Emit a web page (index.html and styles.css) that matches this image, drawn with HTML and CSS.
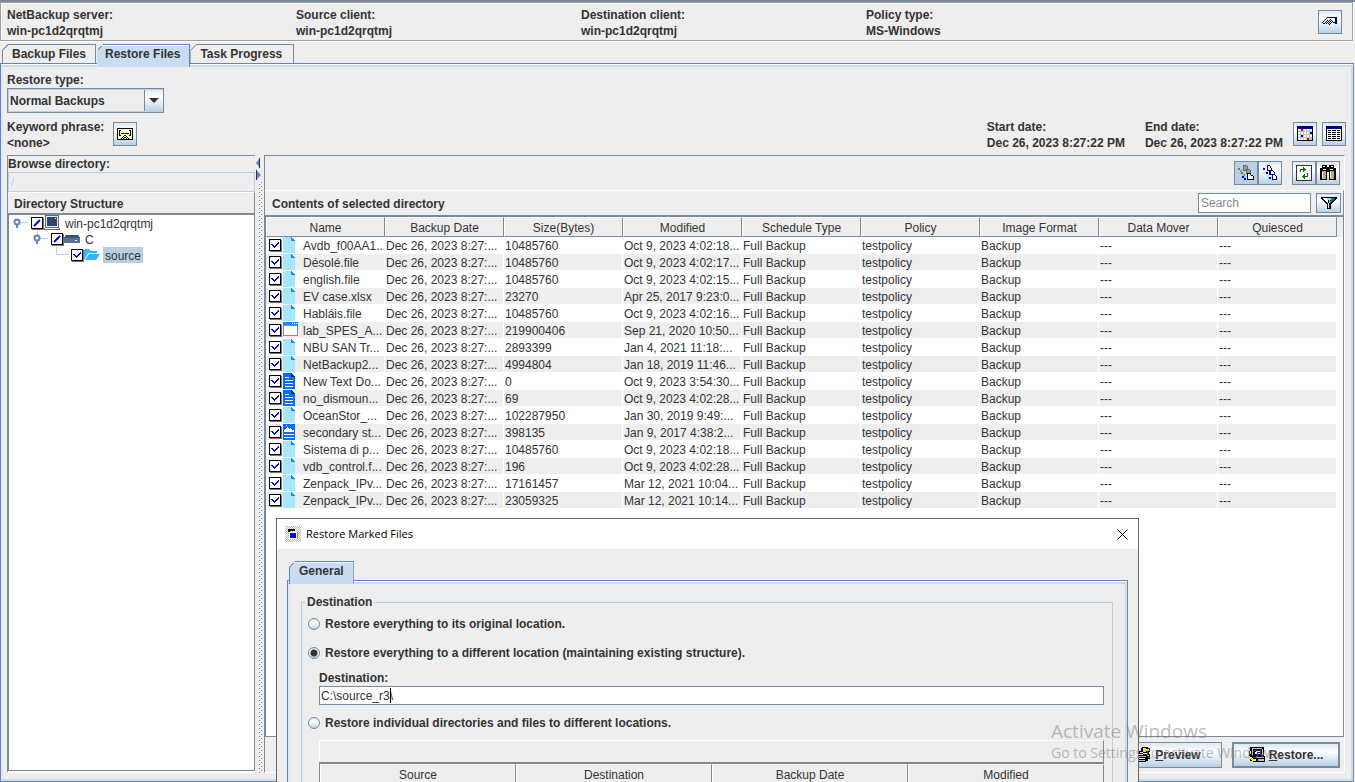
FILE: index.html
```html
<!DOCTYPE html>
<html lang="en">
<head>
<meta charset="utf-8">
<title>Backup, Archive, and Restore</title>
<link rel="stylesheet" href="styles.css">
</head>
<body>
<svg class="sprite" aria-hidden="true">
  <symbol id="i-file" viewBox="0 0 16 16"><path fill="#a6e7ff" d="M0 0h8v4h4v12H0z"/><path fill="#1a8cff" d="M8 0l4 4H8z"/></symbol>
  <symbol id="i-text" viewBox="0 0 16 16"><path fill="#0a6cff" d="M0 0h8v4h4v12H0z"/><path fill="#003a5c" d="M8 0l4 4H8z"/><path fill="#fff" d="M2 4h4v1H2zM2 7h8v1H2zM2 10h8v1H2zM2 13h8v1H2z"/></symbol>
  <symbol id="i-pic" viewBox="0 0 16 16"><path fill="#0a6cff" d="M0 0h12v16H0z"/><path fill="#fff" d="M1 8V6h1V5h1V4h1V3h1v1h1v1h1V4h1v1h1v1h2v2zM3 1h1v1H3zM1 10h10v1H1zM1 13h10v1H1z"/></symbol>
  <symbol id="i-app" viewBox="0 0 16 16"><path fill="#8c8c8c" d="M0 1h15v13H0z"/><path fill="#fff" d="M1 4h13v9H1z"/><path fill="#1a8cff" d="M0 0h15v3H0z"/><path fill="#fff" d="M9 1h1v1H9zM11 1h1v1h-1zM13 1h1v1h-1z"/></symbol>
</svg>

<div class="app">
  <header class="info">
    <div>NetBackup server:<br>win-pc1d2qrqtmj</div>
    <div>Source client:<br>win-pc1d2qrqtmj</div>
    <div>Destination client:<br>win-pc1d2qrqtmj</div>
    <div>Policy type:<br>MS-Windows</div>
    <button class="btn icon-btn" aria-label="Change client settings">
      <svg width="16" height="16" viewBox="0 0 16 16" shape-rendering="crispEdges"><path fill="#fff" d="M4 4h9v4H8L5 9z"/><path fill="#000" d="M5 3h8v1H5zM4 4h1v1H4zM3 5h1v1H3zM2 6h1v1H2zM1 7h1v1H1zM0 8h1v1H0zM8 5h1v1H8zM9 6h1v1H9zM10 7h1v1h-1zM11 8h2v1h-2zM1 9h2v1H1zM3 8h1v1H3zM5 6h1v1H5zM4 7h1v1H4zM6 7h1v1H6zM5 8h1v1H5zM7 6h1v1H7zM7 8h1v1H7zM8 7h1v1H8zM4 9h1v1H4zM6 9h1v1H6zM8 9h1v1H8zM7 10h1v1H7zM9 8h1v1H9z"/><path fill="#000080" d="M13 3h2v7h-2z"/></svg>
    </button>
  </header>

  <nav class="tabs">
    <button class="tab">Backup Files</button>
    <button class="tab selected">Restore Files</button>
    <button class="tab">Task Progress</button>
  </nav>

  <main class="pane">
    <div class="restore-type">
      <label for="rtype">Restore type:</label>
      <select id="rtype" class="combo"><option>Normal Backups</option></select>
    </div>
    <div class="criteria">
      <div class="keyword">Keyword phrase:<br>&lt;none&gt;</div>
      <button class="btn icon-btn" aria-label="Edit keyword phrase">
        <svg width="16" height="12" viewBox="0 0 16 12" shape-rendering="crispEdges"><path d="M0 0h16v12H0z"/><path fill="#ffffcf" d="M1 1h14v10H1z"/><path d="M2 2h2v1H3v4h1v1H2zM12 2h2v6h-2V7h1V3h-1zM7 7h2v1H7zM6 8h1v1H6zM9 8h1v1H9zM5 9h1v1H5zM10 9h1v1h-1zM4 10h1v1H4zM7 9h2v1H7zM6 10h1v1H6zM9 10h1v1H9zM11 10h1v1h-1z"/><path fill="#00f" d="M4 5h8v1H4z"/></svg>
      </button>
      <span class="spacer"></span>
      <div class="date">Start date:<br>Dec 26, 2023 8:27:22 PM</div>
      <div class="date">End date:<br>Dec 26, 2023 8:27:22 PM</div>
      <button class="btn icon-btn" aria-label="Choose dates">
        <svg width="16" height="16" viewBox="0 0 16 16" shape-rendering="crispEdges"><path d="M0 0h16v15H0z"/><path fill="#000080" d="M0 0h16v3H0z"/><path fill="#c0c0c0" d="M1 3h14v11H1z"/><path fill="#fff" d="M1 3h2v2H1zM7 3h2v2H7zM10 3h2v2h-2zM1 6h2v2H1zM4 6h2v2H4zM7 6h2v2H7zM10 6h2v2h-2zM1 9h2v2H1zM7 9h2v2H7zM10 9h2v2h-2zM13 9h2v2h-2zM1 12h2v2H1zM4 12h2v2H4zM7 12h2v2H7zM13 3h2v2h-2z"/><path fill="red" d="M4 3h2v2H4zM10 12h2v2h-2z"/><path fill="#00f" d="M13 6h2v2h-2zM4 9h2v2H4z"/></svg>
      </button>
      <button class="btn icon-btn" aria-label="List images">
        <svg width="16" height="16" viewBox="0 0 16 16" shape-rendering="crispEdges"><path d="M0 0h16v15H0z"/><path fill="#000080" d="M0 0h16v3H0z"/><path fill="#fff" d="M1 3h14v11H1z"/><path d="M2 4h3v1H2zM6 4h4v1H6zM11 4h3v1h-3zM2 6h3v1H2zM6 6h4v1H6zM11 6h3v1h-3zM2 8h3v1H2zM6 8h4v1H6zM11 8h3v1h-3zM2 10h3v1H2zM6 10h4v1H6zM11 10h3v1h-3zM2 12h3v1H2zM6 12h4v1H6zM11 12h3v1h-3z"/></svg>
      </button>
    </div>

    <div class="split">
      <section class="browse">
        <label class="browse-label" for="dir">Browse directory:</label>
        <input id="dir" class="dir-input" type="text" value="/" disabled>
        <h2 class="section-title">Directory Structure</h2>
        <ul class="tree">
          <li class="node level-0">
            <svg class="handle" width="16" height="16" viewBox="0 0 16 16"><path stroke="#b8cfe5" d="M7 7.500h8"/><path stroke="#6382bf" stroke-width="2" d="M4 9v4"/><circle cx="4" cy="7" r="2.500" fill="#fff" stroke="#6382bf" stroke-width="2"/></svg>
            <input type="checkbox" class="check part" id="n0"><svg width="16" height="16" viewBox="0 0 16 16" shape-rendering="crispEdges"><path fill="#5a6c8c" d="M1 0h14v13h1v2H0v-2h1z"/><path fill="#e8eef8" d="M2 1h12v11H2z"/><path fill="#2f4468" d="M3 2h10v9H3z"/><path fill="#fff" d="M11 3h1v1h-1zM1 13h14v1H1z"/></svg><label for="n0">win-pc1d2qrqtmj</label>
          </li>
          <li class="node level-1">
            <svg class="handle" width="16" height="16" viewBox="0 0 16 16"><path stroke="#b8cfe5" d="M7 7.500h8M4.500 0v4"/><path stroke="#6382bf" stroke-width="2" d="M4 9v4"/><circle cx="4" cy="7" r="2.500" fill="#fff" stroke="#6382bf" stroke-width="2"/></svg>
            <input type="checkbox" class="check part" id="n1"><svg width="16" height="16" viewBox="0 0 16 16"><path fill="#5b6f96" d="M2 4h12l2 3v5H0V7z"/><path fill="#3d5077" d="M2 4h12l2 3H0z"/><path fill="#fff" d="M11 9h2v1h-2z"/></svg><label for="n1">C</label>
          </li>
          <li class="node level-2">
            <svg class="handle" width="16" height="16" viewBox="0 0 16 16" fill="none"><path stroke="#b8cfe5" d="M3.500 0v7.500H16"/></svg>
            <input type="checkbox" class="check" id="n2" checked><svg width="16" height="16" viewBox="0 0 16 16"><path fill="#35b6ff" d="M0 2h5l2 2h6v2H4L1 12H0z"/><path fill="#35b6ff" d="M5 7h11l-4 6H1z"/></svg><label for="n2" class="chosen">source</label>
          </li>
        </ul>
      </section>

      <div class="divider">
        <svg width="6" height="26" viewBox="0 0 6 26"><path fill="#eee" d="M0 0h6v26H0z"/><path fill="#6382bf" d="M4 3v10L0 8z"/><path fill="#333" d="M3 3h1v10H3z"/><path fill="#6382bf" d="M0 15v10l5-5z"/><path fill="#333" d="M0 15h1v10H0z"/></svg>
      </div>

      <section class="contents">
        <div class="toolbar">
          <div class="group">
            <button class="btn icon-btn pressed" aria-label="Show all backups">
              <svg width="16" height="16" viewBox="0 0 16 16" shape-rendering="crispEdges"><path fill="#999" d="M5 0h4v1h1v3h2v1h1v4H8V6H5z"/><path fill="#666" d="M5 0h4v1H6v4h2v1H5zM9 1h1v3H9zM8 4h4v1H9v3h3v1H8zM12 5h1v4h-1z"/><path fill="#fff" d="M10 9h2v2h3v3h-5z"/><path d="M9 8h4v1h-3v5h5v1H9zM12 9h1v1h-1zM13 10h2v1h-2zM15 11h1v4h-1z"/><path fill="#00a0a0" d="M0 3h2v2H0zM3 7h2v2H3z"/><path fill="#c90" d="M2 5h2v2H2zM5 9h2v2H5z"/><path fill="#00f" d="M4 11h2v2H4zM6 13h2v2H6z"/><path fill="#0ff" d="M6 12h1v1H6z"/></svg>
            </button><button class="btn icon-btn" aria-label="Show recent backup">
              <svg width="16" height="16" viewBox="0 0 16 16" shape-rendering="crispEdges"><path fill="#fff" d="M6 1h2v4H6zM8 5h3v4H8zM11 9h3v5h-3z"/><path fill="#000080" d="M5 0h3v1H6v4h3V3h1v3H5zM8 1h1v2H8zM8 6h1v3h3V7h1v3H7V6zM10 5h1v1h-1zM11 6h1v1h-1zM11 10v4h3v-3h1v4h-5v-5zM13 10h1v1h-1z"/><path fill="#00f" d="M1 3h2v2H1zM4 7h2v2H4zM7 12h2v2H7z"/><path fill="#0ff" d="M1 2h1v1H1zM3 7h1v1H3zM6 12h1v1H6z"/></svg>
            </button>
          </div>
          <div class="group">
            <button class="btn icon-btn" aria-label="Refresh">
              <svg width="16" height="16" viewBox="0 0 16 16" shape-rendering="crispEdges"><path d="M0 0h16v16H0z" fill="#333"/><path fill="#fff" d="M1 1h14v14H1z"/><path fill="#007800" d="M7 2h1v1h1v1h1v1H9v1H8v1H7V5H5v2H4V4h3zM11 8h1v4H9v2H8v-1H7v-1H6v-1h1v-1h1V9h1v2h2z"/></svg>
            </button><button class="btn icon-btn" aria-label="Find">
              <svg width="16" height="16" viewBox="0 0 16 16" shape-rendering="crispEdges"><path d="M2 0h5v2h2V0h5v3h2v12H9V7H7v8H0V3h2z"/><path fill="#b9ad73" d="M2 6h4v8H2zM10 6h4v8h-4z"/><path fill="#fff" d="M3 1h2v1H3zM11 1h2v1h-2zM3 4h3v1H3zM10 4h3v1h-3zM2 7h1v6H2zM10 7h1v6h-1z"/></svg>
            </button>
          </div>
        </div>
        <div class="contents-head">
          <h2>Contents of selected directory</h2>
          <input class="search" type="text" placeholder="Search" aria-label="Search">
          <button class="btn filter-btn" aria-label="Filter">
            <svg width="16" height="12" viewBox="0 0 16 12" shape-rendering="crispEdges"><path d="M0 0h16v2h-1v1h-1v1h-1v1h-1v1h-1v1h-1v5H6V7H5V6H4V5H3V4H2V3H1V2H0z"/><path fill="#fff" d="M2 1h4v2h1v3h1v5H7V6H6V5H5V4H4V3H3V2H2z"/><path fill="#bcd" d="M6 1h4v2H9v3H8V3H6z"/><path fill="#088" d="M10 1h4v1h-1v1h-1v1h-1v1h-1v1H9V4h1z"/></svg>
          </button>
        </div>
        <div class="table-wrap">
          <table class="files">
            <thead><tr><th>Name</th><th>Backup Date</th><th>Size(Bytes)</th><th>Modified</th><th>Schedule Type</th><th>Policy</th><th>Image Format</th><th>Data Mover</th><th>Quiesced</th></tr></thead>
            <tbody>
              <tr><td><label><input type="checkbox" class="check" checked><svg><use href="#i-file"/></svg>Avdb_f00AA1...</label></td><td>Dec 26, 2023 8:27:...</td><td>10485760</td><td>Oct 9, 2023 4:02:18...</td><td>Full Backup</td><td>testpolicy</td><td>Backup</td><td>---</td><td>---</td></tr>
              <tr><td><label><input type="checkbox" class="check" checked><svg><use href="#i-file"/></svg>Désolé.file</label></td><td>Dec 26, 2023 8:27:...</td><td>10485760</td><td>Oct 9, 2023 4:02:17...</td><td>Full Backup</td><td>testpolicy</td><td>Backup</td><td>---</td><td>---</td></tr>
              <tr><td><label><input type="checkbox" class="check" checked><svg><use href="#i-file"/></svg>english.file</label></td><td>Dec 26, 2023 8:27:...</td><td>10485760</td><td>Oct 9, 2023 4:02:15...</td><td>Full Backup</td><td>testpolicy</td><td>Backup</td><td>---</td><td>---</td></tr>
              <tr><td><label><input type="checkbox" class="check" checked><svg><use href="#i-file"/></svg>EV case.xlsx</label></td><td>Dec 26, 2023 8:27:...</td><td>23270</td><td>Apr 25, 2017 9:23:0...</td><td>Full Backup</td><td>testpolicy</td><td>Backup</td><td>---</td><td>---</td></tr>
              <tr><td><label><input type="checkbox" class="check" checked><svg><use href="#i-file"/></svg>Habláis.file</label></td><td>Dec 26, 2023 8:27:...</td><td>10485760</td><td>Oct 9, 2023 4:02:16...</td><td>Full Backup</td><td>testpolicy</td><td>Backup</td><td>---</td><td>---</td></tr>
              <tr><td><label><input type="checkbox" class="check" checked><svg><use href="#i-app"/></svg>lab_SPES_A...</label></td><td>Dec 26, 2023 8:27:...</td><td>219900406</td><td>Sep 21, 2020 10:50...</td><td>Full Backup</td><td>testpolicy</td><td>Backup</td><td>---</td><td>---</td></tr>
              <tr><td><label><input type="checkbox" class="check" checked><svg><use href="#i-file"/></svg>NBU SAN Tr...</label></td><td>Dec 26, 2023 8:27:...</td><td>2893399</td><td>Jan 4, 2021 11:18:...</td><td>Full Backup</td><td>testpolicy</td><td>Backup</td><td>---</td><td>---</td></tr>
              <tr><td><label><input type="checkbox" class="check" checked><svg><use href="#i-file"/></svg>NetBackup2...</label></td><td>Dec 26, 2023 8:27:...</td><td>4994804</td><td>Jan 18, 2019 11:46...</td><td>Full Backup</td><td>testpolicy</td><td>Backup</td><td>---</td><td>---</td></tr>
              <tr><td><label><input type="checkbox" class="check" checked><svg><use href="#i-text"/></svg>New Text Do...</label></td><td>Dec 26, 2023 8:27:...</td><td>0</td><td>Oct 9, 2023 3:54:30...</td><td>Full Backup</td><td>testpolicy</td><td>Backup</td><td>---</td><td>---</td></tr>
              <tr><td><label><input type="checkbox" class="check" checked><svg><use href="#i-text"/></svg>no_dismoun...</label></td><td>Dec 26, 2023 8:27:...</td><td>69</td><td>Oct 9, 2023 4:02:28...</td><td>Full Backup</td><td>testpolicy</td><td>Backup</td><td>---</td><td>---</td></tr>
              <tr><td><label><input type="checkbox" class="check" checked><svg><use href="#i-file"/></svg>OceanStor_...</label></td><td>Dec 26, 2023 8:27:...</td><td>102287950</td><td>Jan 30, 2019 9:49:...</td><td>Full Backup</td><td>testpolicy</td><td>Backup</td><td>---</td><td>---</td></tr>
              <tr><td><label><input type="checkbox" class="check" checked><svg><use href="#i-pic"/></svg>secondary st...</label></td><td>Dec 26, 2023 8:27:...</td><td>398135</td><td>Jan 9, 2017 4:38:2...</td><td>Full Backup</td><td>testpolicy</td><td>Backup</td><td>---</td><td>---</td></tr>
              <tr><td><label><input type="checkbox" class="check" checked><svg><use href="#i-file"/></svg>Sistema di p...</label></td><td>Dec 26, 2023 8:27:...</td><td>10485760</td><td>Oct 9, 2023 4:02:18...</td><td>Full Backup</td><td>testpolicy</td><td>Backup</td><td>---</td><td>---</td></tr>
              <tr><td><label><input type="checkbox" class="check" checked><svg><use href="#i-file"/></svg>vdb_control.f...</label></td><td>Dec 26, 2023 8:27:...</td><td>196</td><td>Oct 9, 2023 4:02:28...</td><td>Full Backup</td><td>testpolicy</td><td>Backup</td><td>---</td><td>---</td></tr>
              <tr><td><label><input type="checkbox" class="check" checked><svg><use href="#i-file"/></svg>Zenpack_IPv...</label></td><td>Dec 26, 2023 8:27:...</td><td>17161457</td><td>Mar 12, 2021 10:04...</td><td>Full Backup</td><td>testpolicy</td><td>Backup</td><td>---</td><td>---</td></tr>
              <tr><td><label><input type="checkbox" class="check" checked><svg><use href="#i-file"/></svg>Zenpack_IPv...</label></td><td>Dec 26, 2023 8:27:...</td><td>23059325</td><td>Mar 12, 2021 10:14...</td><td>Full Backup</td><td>testpolicy</td><td>Backup</td><td>---</td><td>---</td></tr>
            </tbody>
          </table>
        </div>
        <div class="actions">
          <button class="btn action">
            <svg width="16" height="16" viewBox="0 0 16 16" shape-rendering="crispEdges"><path d="M7 0h6v1h2v4h-1v2h1v5h-2v2h-2v1H2v-1H0V9h1V8h2V6h1V4h2V1h1z"/><path fill="#ffde00" d="M8 1h3v4H8z"/><path fill="#fff" d="M11 2h3v2h-3zM5 5h3v1H5zM8 6h4v1H8zM4 7h4v1H4zM2 11h8v1H2z"/><path fill="#c0c0c0" d="M3 9h8v1H3zM12 8h2v1h-2zM3 13h7v1H3z"/><path fill="#ff0" d="M8 11h1v1H8z"/></svg>
            <span><u>P</u>review</span>
          </button>
          <button class="btn action default">
            <svg width="16" height="16" viewBox="0 0 16 16" shape-rendering="crispEdges"><path d="M1 0h14v9h1v6H4v-1H1V9H0V4h1z"/><path fill="#c0c0c0" d="M3 1h10v1H3zM13 2h1v6h-1zM3 2h1v6H3zM7 10h8v1H7zM9 12h6v2H9z"/><path fill="#000080" d="M5 3h7v5H5z"/><path fill="#fff" d="M7 4h4v1H7zM6 5h2v2H6zM9 6h2v1H9z"/><path fill="#ff0" d="M1 10h2v1h1v1h3v2H3v-1H2v-1H1zM1 4h1v3H1z"/></svg>
            <span><u>R</u>estore...</span>
          </button>
        </div>
      </section>
    </div>
  </main>

  <div class="dialog" role="dialog" aria-labelledby="dlg-title">
    <div class="titlebar">
      <svg width="16" height="16" viewBox="0 0 16 16" shape-rendering="crispEdges"><defs><pattern id="dither" width="2" height="2" patternUnits="userSpaceOnUse"><path fill="#bbb" d="M0 0h1v1H0zM1 1h1v1H1z"/></pattern></defs><path fill="url(#dither)" d="M0 0h16v16H0z"/><path d="M3 3h7v2H5v3H4V5H3z"/><path fill="#fff" d="M4 6h8v7H4z"/><path fill="#000" d="M3 4h2v2H3z"/><path fill="#00f" d="M5 7h6v5H5z"/><path fill="#888" d="M12 6h1v7h-1z"/></svg>
      <span id="dlg-title">Restore Marked Files</span>
      <button class="close" aria-label="Close"><svg width="11" height="11" viewBox="0 0 11 11"><path d="M.5.5l10 10M10.500.5l-10 10" stroke="#000"/></svg></button>
    </div>
    <div class="dialog-body">
      <nav class="tabs"><button class="tab selected first">General</button></nav>
      <div class="pane dialog-pane">
        <fieldset>
          <legend>Destination</legend>
          <label class="option"><input type="radio" name="where">Restore everything to its original location.</label>
          <label class="option"><input type="radio" name="where" checked>Restore everything to a different location (maintaining existing structure).</label>
          <div class="target">
            <label for="dest">Destination:</label>
            <div class="field"><input id="dest" type="text" value="C:\source_r3\"><i class="caret"></i></div>
          </div>
          <label class="option"><input type="radio" name="where">Restore individual directories and files to different locations.</label>
          <div class="dest-list">
            <div class="strip"></div>
            <table class="dest-table"><thead><tr><th>Source</th><th>Destination</th><th>Backup Date</th><th>Modified</th></tr></thead></table>
          </div>
        </fieldset>
      </div>
    </div>
  </div>

  <div class="watermark"><div class="wm-title">Activate Windows</div><div>Go to Settings to activate Windows.</div></div>
</div>
</body>
</html>
```
FILE: styles.css
```css
:root {
  --bg: #eee;
  --line: #7a8a99;
  --soft: #b8cfe5;
  --blue: #6382bf;
  --sel: #c8ddf2;
  --text: #333;
}

* { box-sizing: border-box; }

body {
  margin: 0;
  background: var(--bg);
  color: var(--text);
  font: bold 12px/16px "Liberation Sans", Arial, sans-serif;
}

button, input, select { font: inherit; color: inherit; margin: 0; }
h2 { margin: 0; font-size: 12px; }
svg { flex: none; display: block; }
.sprite { position: absolute; width: 0; height: 0; }

.app {
  position: relative;
  display: flex;
  flex-direction: column;
  height: 100vh;
  overflow: hidden;
  border-top: 2px solid var(--line);
}

/* connection summary */
.info {
  display: grid;
  grid-template-columns: 289px 285px 285px 1fr auto;
  align-items: center;
  margin-right: 2px;
  padding: 4px 10px 1px 6px;
  border: 1px solid #a0a0a0;
  box-shadow: inset 1px 1px #fff, 0 1px #fff, 1px 0 #fff;
}
.info .icon-btn { margin-bottom: 2px; }

/* buttons */
.btn {
  display: flex;
  align-items: center;
  justify-content: center;
  padding: 0;
  border: 1px solid var(--line);
  background: linear-gradient(#dde8f3, #fff 35%, #f4f8fc 45%, #b8cfe5);
}
.icon-btn { flex: none; width: 24px; height: 24px; }
.pressed { background: var(--soft); }

/* tabs */
.tabs { display: flex; gap: 1px; padding: 3px 2px 0; }
.tab {
  height: 19px;
  padding: 0 9px;
  border: 1px solid var(--line);
  border-bottom: 0;
  background: linear-gradient(135deg, var(--line) 5px, var(--bg) 5px) border-box;
  clip-path: polygon(6px 0, 100% 0, 100% 100%, 0 100%, 0 6px);
  font-weight: bold;
  line-height: 16px;
}
.tab.selected {
  position: relative;
  height: 23px;
  margin-bottom: -4px;
  padding: 0 9px 4px 7px;
  border-color: var(--blue);
  border-left-color: var(--sel);
  background: linear-gradient(135deg, var(--line) 5px, var(--sel) 5px) border-box;
  box-shadow: inset 0 1px #fff;
}
.tab.first { padding-left: 9px; border-left-color: var(--blue); }
.selected + .tab { margin-left: -1px; padding-right: 11px; }

.pane {
  flex: 1;
  display: flex;
  flex-direction: column;
  min-height: 0;
  margin-right: 1px;
  padding: 9px 8px 8px 6px;
  border: 1px solid var(--line);
  border-top-color: var(--blue);
  border-left-color: var(--blue);
  box-shadow: inset 0 1px #fff, inset 0 3px var(--sel), inset -2px -2px var(--sel), inset 2px 0 #e0eaf5;
}

/* criteria */
.restore-type { display: flex; flex-direction: column; align-items: flex-start; }
.restore-type label { line-height: 15px; }
.combo {
  appearance: none;
  width: 157px;
  height: 25px;
  padding: 0 24px 0 2px;
  border: 1px solid var(--line);
  border-radius: 0;
  background:
    url("data:image/svg+xml,%3Csvg xmlns='http://www.w3.org/2000/svg' width='10' height='5'%3E%3Cpath fill='%23333' d='M0 0h10L5 5z'/%3E%3C/svg%3E") no-repeat right 4px center,
    linear-gradient(#dde8f3, #fff 35%, #f4f8fc 45%, #b8cfe5) no-repeat right / 18px 100%,
    linear-gradient(var(--line), var(--line)) no-repeat right 18px top / 1px 100%,
    var(--bg);
  box-shadow: inset 1px 1px var(--soft), inset 0 -1px var(--soft);
}
.criteria { display: flex; align-items: center; margin-top: 6px; margin-bottom: 4px; }
.criteria .icon-btn { margin-bottom: 2px; }
.keyword { margin-right: 9px; }
.spacer { flex: 1; }
.date { margin-right: 20px; }
.date + .icon-btn { margin-left: -10px; margin-right: 5px; }
.criteria > .icon-btn:last-child { margin-right: -1px; }

/* split pane */
.split { flex: 1; display: flex; min-height: 0; }
.browse {
  flex: none;
  width: 248px;
  display: flex;
  flex-direction: column;
  border: 1px solid var(--line);
  border-right: 0;
  border-bottom: 2px solid #fff;
}
.browse-label { padding-top: 1px; line-height: 15px; }
.dir-input {
  width: 247px;
  height: 20px;
  padding: 0 2px;
  border: 1px solid var(--soft);
  background: var(--bg);
  color: var(--soft);
  font-weight: normal;
}
.section-title {
  height: 21px;
  padding: 1px 0 0 6px;
  border-top: 1px solid #fff;
  border-right: 1px solid var(--line);
  line-height: 20px;
}
.tree {
  flex: 1;
  margin: 0;
  padding: 0;
  list-style: none;
  background: #fff;
  border: 1px solid var(--line);
  border-top-width: 2px;
  font-weight: normal;
}
.node { display: flex; align-items: center; height: 16px; }
.node label { height: 16px; margin-left: 3px; padding: 0 2px; line-height: 18px; }
.node .handle { margin-right: 2px; }
.node .check { margin-right: 1px; }
.level-0 { padding-left: 4px; }
.level-1 { padding-left: 24px; }
.level-2 { padding-left: 44px; }
.node .chosen { background: var(--soft); }

.check {
  appearance: none;
  flex: none;
  width: 12px;
  height: 12px;
  margin: 0 2px 0 0;
  border: 1px solid #000;
  background: #fff center no-repeat;
  box-shadow: 1px 1px #777;
}
.check:checked { background-image: url("data:image/svg+xml,%3Csvg xmlns='http://www.w3.org/2000/svg' width='10' height='10' shape-rendering='crispEdges'%3E%3Cpath fill='%230000f0' d='M1 4h2v1h1v1h1V5h1V4h1V3h1V2h1v2H8v1H7v1H6v1H5v1H4V7H3V6H2V5H1z'/%3E%3C/svg%3E"); }
.part { background-image: url("data:image/svg+xml,%3Csvg xmlns='http://www.w3.org/2000/svg' width='10' height='10'%3E%3Cpath stroke='%230000f0' stroke-width='2' d='M2 8l6-6'/%3E%3C/svg%3E"); }

.divider {
  flex: none;
  width: 9px;
  padding-left: 1px;
  background: url("data:image/svg+xml,%3Csvg xmlns='http://www.w3.org/2000/svg' width='9' height='4'%3E%3Cpath fill='%23fff' d='M3 0h1v1H3zM5 2h1v1H5z'/%3E%3Cpath fill='%237a8a99' d='M4 1h1v1H4zM6 3h1v1H6z'/%3E%3C/svg%3E") repeat-y;
}

/* file list */
.contents {
  flex: 1;
  min-width: 0;
  display: flex;
  flex-direction: column;
  border: 1px solid var(--line);
  border-right: 1px solid #fff;
  border-bottom: 1px solid #fff;
}
.toolbar { display: flex; justify-content: flex-end; gap: 10px; padding: 5px 4px 5px 0; }
.group { display: flex; }
.contents-head {
  display: flex;
  align-items: center;
  gap: 5px;
  height: 25px;
  padding: 0 2px 0 7px;
  border-top: 1px solid #fff;
  border-right: 1px solid var(--line);
}
.contents-head h2 { flex: 1; padding-top: 1px; }
.search {
  width: 113px;
  height: 20px;
  padding: 0 2px;
  border: 1px solid var(--line);
  background: #fff;
  font-weight: normal;
}
.search::placeholder { color: #888; opacity: 1; }
.filter-btn { width: 25px; height: 20px; }
.table-wrap {
  flex: 1;
  min-height: 0;
  border: 1px solid var(--line);
  border-top-width: 2px;
  background: linear-gradient(var(--bg), var(--bg)) no-repeat top / 100% 20px, #fff;
  padding-right: 6px;
}
.files, .dest-table { width: 100%; table-layout: fixed; border-collapse: separate; border-spacing: 0; font-weight: normal; }
.files th, .dest-table th {
  height: 20px;
  padding: 1px 0 0;
  border: 1px solid var(--line);
  border-top-color: #fff;
  border-left-color: #fff;
  background: var(--bg);
  font-weight: normal;
}
.files td {
  height: 17px;
  padding: 2px 0 0 1px;
  border-right: 1px solid #fff;
  border-bottom: 1px solid #fff;
  line-height: 14px;
  white-space: nowrap;
  overflow: hidden;
}
.files td:first-child { padding: 0 0 0 3px; }
.files tr:nth-child(even) td { background: var(--bg); }
.files label { display: flex; align-items: flex-start; height: 16px; line-height: 18px; }
.files .check { margin-top: 2px; }
.files svg { width: 16px; height: 16px; margin-right: 4px; shape-rendering: crispEdges; }

.actions { display: flex; justify-content: flex-end; gap: 10px; padding: 5px 4px 4px; }
.action { gap: 4px; width: 108px; height: 26px; }
.action.default { border-width: 2px; }

/* dialog */
.dialog {
  position: absolute;
  left: 276px;
  top: 516px;
  bottom: 0;
  width: 863px;
  display: flex;
  flex-direction: column;
  overflow: hidden;
  border: 1px solid #666;
  border-bottom: 0;
  background: var(--bg);
}
.titlebar {
  flex: none;
  display: flex;
  align-items: center;
  gap: 5px;
  height: 30px;
  padding: 0 8px;
  background: #fff;
  color: #000;
  font: 11px/16px "Open Sans", "Noto Sans", sans-serif;
}
.titlebar span { flex: 1; }
.close { padding: 2px; border: 0; background: none; }
.dialog-body { flex: none; padding: 9px 10px 0 10px; }
.dialog-pane { margin: 0; padding: 13px 14px 0 13px; min-height: 240px; }
fieldset {
  min-width: 0;
  margin: 0;
  padding: 4px 8px 0 6px;
  border: 1px solid var(--soft);
  border-bottom: 0;
}
legend { padding: 0 2px; margin-left: -3px; }
.option { display: flex; align-items: center; gap: 5px; height: 20px; margin-bottom: 9px; }
.option input {
  appearance: none;
  width: 12px;
  height: 12px;
  border: 1px solid var(--line);
  border-radius: 50%;
  background: linear-gradient(#dde8f3, #fff 40%, #b8cfe5);
}
.option input:checked { background: radial-gradient(circle, #333 3px, transparent 4px), linear-gradient(#dde8f3, #fff 40%, #b8cfe5); }
.target { display: flex; flex-direction: column; margin: -2px 0 8px 11px; }
.field { position: relative; }
.field input {
  display: block;
  width: 100%;
  height: 19px;
  padding: 0 1px;
  border: 1px solid var(--line);
  background: #fff;
  font-weight: normal;
}
.caret { position: absolute; left: 71px; top: 2px; width: 1px; height: 15px; background: #000; }
.dest-list { margin: -2px 0 0 11px; }
.strip { height: 22px; border: 1px solid #fff; border-right-color: var(--line); border-bottom: 0; }
.dest-table { border-top: 2px solid var(--line); border-left: 1px solid var(--line); }

.watermark {
  position: absolute;
  left: 1051px;
  top: 717px;
  color: rgba(130, 130, 130, .55);
  font: 14px/20px "Open Sans", "Noto Sans", sans-serif;
  white-space: nowrap;
  pointer-events: none;
}
.wm-title { font-size: 19px; line-height: 24px; }
```
